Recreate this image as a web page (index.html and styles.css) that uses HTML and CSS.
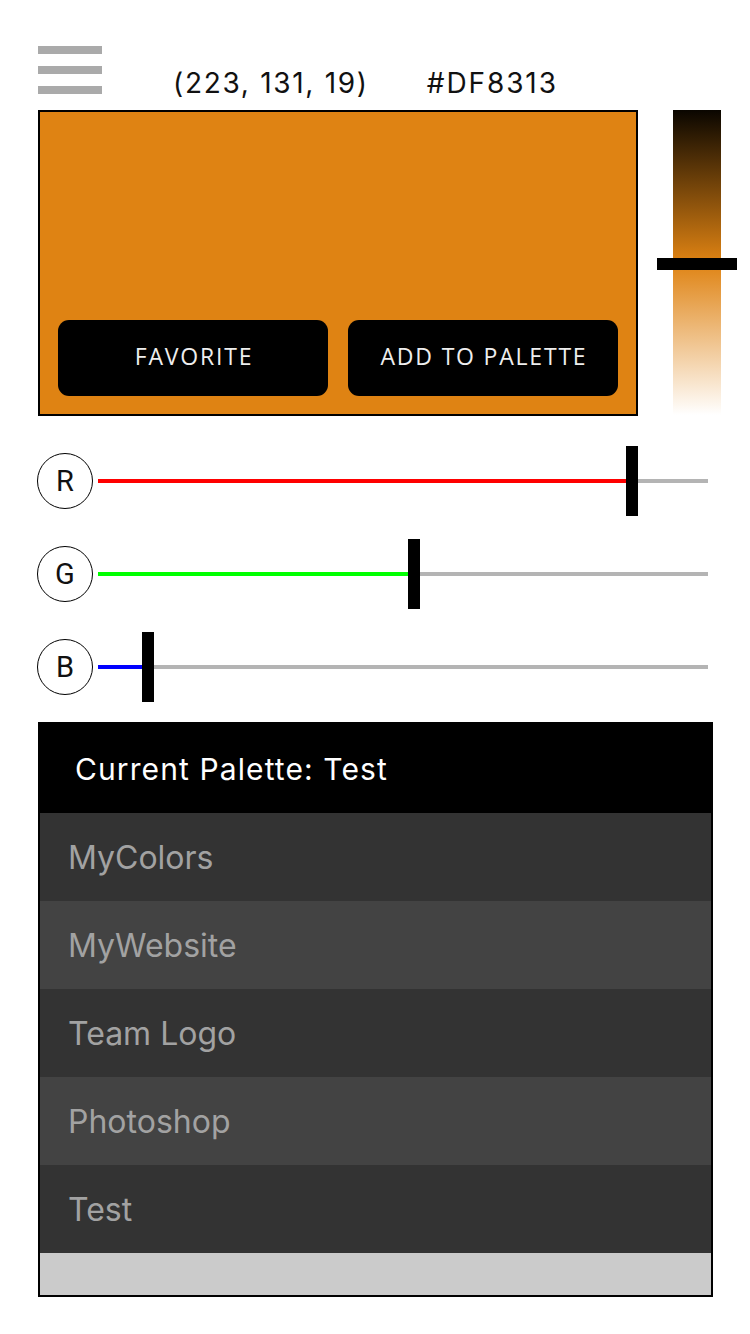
FILE: index.html
```html
<!DOCTYPE html>
<html>
<head>
<meta charset="utf-8">
<link rel="stylesheet" href="styles.css">
</head>
<body>
<div class="page">
  <div class="topbar">
    <div class="menu"><span></span><span></span><span></span></div>
    <div class="rgb">(223, 131, 19)</div>
    <div class="hex">#DF8313</div>
  </div>
  <div class="picker">
    <div class="swatch">
      <button class="btn">FAVORITE</button>
      <button class="btn">ADD TO PALETTE</button>
    </div>
    <div class="shade">
      <div class="shade-bar"></div>
      <div class="shade-handle"></div>
    </div>
  </div>
  <div class="sliders">
    <div class="slider">
      <div class="chan">R</div>
      <div class="track">
        <div class="fill fill-r" style="width:528px"></div>
        <div class="thumb" style="left:528px"></div>
      </div>
    </div>
    <div class="slider">
      <div class="chan">G</div>
      <div class="track">
        <div class="fill fill-g" style="width:310px"></div>
        <div class="thumb" style="left:310px"></div>
      </div>
    </div>
    <div class="slider">
      <div class="chan">B</div>
      <div class="track">
        <div class="fill fill-b" style="width:44px"></div>
        <div class="thumb" style="left:44px"></div>
      </div>
    </div>
  </div>
  <div class="palette">
    <div class="palette-head">Current Palette: Test</div>
    <div class="row row-dark">MyColors</div>
    <div class="row row-light">MyWebsite</div>
    <div class="row row-dark">Team Logo</div>
    <div class="row row-light">Photoshop</div>
    <div class="row row-dark">Test</div>
    <div class="palette-foot"></div>
  </div>
</div>
</body>
</html>
```

FILE: styles.css
```css
html, body {
  margin: 0;
  padding: 0;
  background: #fff;
}
.page {
  width: 750px;
  height: 1334px;
  padding: 46px 0 0 38px;
  box-sizing: border-box;
  font-family: "Inter", "Liberation Sans", sans-serif;
}
.topbar {
  display: flex;
  align-items: flex-end;
  height: 48px;
}
.menu {
  width: 64px;
  height: 48px;
  display: flex;
  flex-direction: column;
  justify-content: space-between;
}
.menu span {
  display: block;
  height: 8px;
  background: #aaaaaa;
}
.rgb, .hex {
  font-size: 28px;
  color: #111;
  line-height: 28px;
  margin-bottom: -3px;
}
.rgb {
  margin-left: 71px;
  letter-spacing: 1.7px;
}
.hex {
  margin-left: 58px;
  letter-spacing: 1.9px;
}
.picker {
  display: flex;
  margin-top: 16px;
  height: 306px;
}
.swatch {
  width: 600px;
  height: 306px;
  box-sizing: border-box;
  border: 2px solid #000;
  background: #df8313;
  padding: 18px;
  display: flex;
  align-items: flex-end;
  gap: 20px;
}
.btn {
  width: 270px;
  height: 76px;
  border: none;
  border-radius: 11px;
  background: #000;
  color: #eeeeee;
  font-family: "Open Sans", "Noto Sans", sans-serif;
  font-size: 23px;
  letter-spacing: 1.8px;
  padding: 0 0 4px 2px;
  margin: 0;
}
.shade {
  position: relative;
  width: 48px;
  height: 306px;
  margin-left: 35px;
}
.shade-bar {
  width: 48px;
  height: 305px;
  background: linear-gradient(to bottom, #0a0600 0%, #df8313 50%, #ffffff 100%);
}
.shade-handle {
  position: absolute;
  left: -16px;
  top: 148px;
  width: 80px;
  height: 12px;
  background: #000;
}
.sliders {
  margin-top: 30px;
  display: flex;
  flex-direction: column;
  gap: 23px;
}
.slider {
  display: flex;
  align-items: center;
  height: 70px;
}
.chan {
  width: 56px;
  height: 56px;
  box-sizing: border-box;
  border: 1.8px solid #000;
  border-radius: 50%;
  display: flex;
  align-items: center;
  justify-content: center;
  font-family: "Roboto", "Liberation Sans", sans-serif;
  font-size: 29px;
  color: #111;
  margin-left: -1px;
}
.track {
  position: relative;
  margin-left: 5px;
  width: 610px;
  height: 4px;
  background: #b4b4b4;
}
.fill {
  height: 4px;
}
.fill-r { background: #ff0000; }
.fill-g { background: #00ff00; }
.fill-b { background: #0000ff; }
.thumb {
  position: absolute;
  top: -33px;
  width: 12px;
  height: 70px;
  background: #000;
}
.palette {
  margin-top: 20px;
  width: 675px;
  box-sizing: border-box;
  border: 2px solid #000;
}
.palette-head {
  height: 89px;
  background: #000;
  color: #fff;
  font-size: 30px;
  letter-spacing: 1.1px;
  display: flex;
  align-items: center;
  padding-left: 35px;
}
.row {
  height: 88px;
  display: flex;
  align-items: center;
  padding-left: 28px;
  font-size: 32px;
  color: #a2a2a2;
}
.row-dark { background: #333333; }
.row-light { background: #434343; }
.palette-foot {
  height: 42px;
  background: #cbcbcb;
}
```
